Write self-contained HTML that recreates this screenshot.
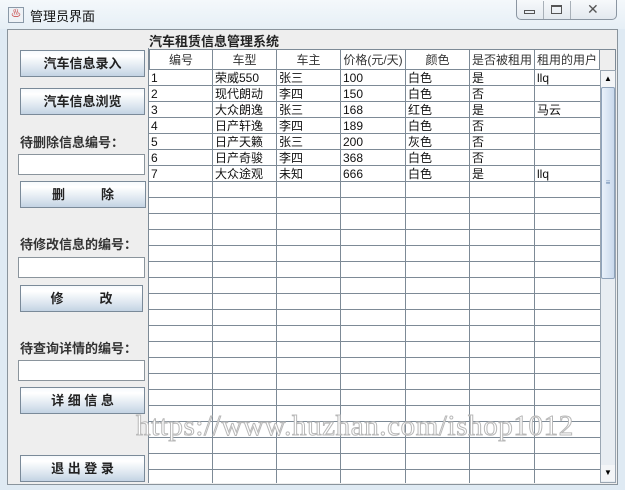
<!DOCTYPE html>
<html><head><meta charset="utf-8"><style>
*{margin:0;padding:0;box-sizing:border-box}
body{width:625px;height:490px;overflow:hidden;background:#dfeaf3;font-family:"Liberation Sans","Noto Sans CJK SC",sans-serif;position:relative}
.a{position:absolute}
.title{left:0;top:0;width:625px;height:29px;background:linear-gradient(#f4f8fb,#e6eff6)}
.panel{left:7px;top:29px;width:611px;height:456px;background:#eeeeee;border:1px solid #8a949c}
.btn{position:absolute;left:20px;width:125px;height:27px;border:1px solid #7a8a99;background:linear-gradient(#f6f9fc 0%,#ffffff 20%,#dbe5ef 70%,#c3d3e3 100%);font-weight:bold;font-size:13px;color:#222;text-align:center;line-height:25px;white-space:nowrap}
.lbl{position:absolute;left:20px;font-weight:bold;font-size:13px;color:#333;white-space:nowrap}
.inp{position:absolute;left:18px;width:127px;height:21px;background:#fff;border:1px solid #8a949c}
.grid{left:149px;top:70px;width:451px;height:413px;background-color:#fff;
background-image:repeating-linear-gradient(to bottom,transparent 0 15px,#7d8a96 15px 16px),linear-gradient(to right,transparent 0 63px,#7d8a96 63px 64px,transparent 64px 127px,#7d8a96 127px 128px,transparent 128px 191px,#7d8a96 191px 192px,transparent 192px 256px,#7d8a96 256px 257px,transparent 257px 320px,#7d8a96 320px 321px,transparent 321px 385px,#7d8a96 385px 386px,transparent 386px)}
.hd{top:49px;height:21px;background:#fff;border-right:1px solid #7d8a96;border-bottom:1px solid #7d8a96;font-size:12px;text-align:center;line-height:20px;color:#333;white-space:nowrap;overflow:hidden}
.c{position:absolute;font-size:12px;line-height:16px;color:#111;white-space:nowrap;width:62px}
</style></head><body>
<div class="a title"></div>
<div class="a" style="left:8px;top:7px;width:16px;height:16px;border:1px solid #8a99a8;background:#eef2f6;font-size:10px;color:#c55;text-align:center;line-height:14px">♨</div>
<div class="a" style="left:30px;top:6px;font-size:13px;color:#111">管理员界面</div>
<div class="a" style="left:516px;top:0;width:101px;height:20px;border:1px solid #8b96a2;border-top:none;border-radius:0 0 5px 5px;background:linear-gradient(#f7f9fb,#e3e9ef)"></div>
<div class="a" style="left:543px;top:1px;width:1px;height:18px;background:#a8b0b8"></div>
<div class="a" style="left:570px;top:1px;width:1px;height:18px;background:#a8b0b8"></div>
<div class="a" style="left:524px;top:10px;width:11px;height:4px;border:1px solid #555"></div>
<div class="a" style="left:551px;top:5px;width:11px;height:9px;border:1px solid #555;border-top-width:2px"></div>
<div class="a" style="left:587px;top:1px;font-size:14px;color:#555">✕</div>
<div class="a panel"></div>
<div class="a" style="left:149px;top:31px;font-weight:bold;font-size:13px;color:#222">汽车租赁信息管理系统</div>
<div class="btn" style="top:50px">汽车信息录入</div>
<div class="btn" style="top:88px">汽车信息浏览</div>
<div class="lbl" style="top:132px">待删除信息编号：</div>
<div class="inp" style="top:154px"></div>
<div class="btn" style="top:181px;width:126px">删&nbsp;&nbsp;&nbsp;&nbsp;&nbsp;&nbsp;&nbsp;&nbsp;&nbsp;&nbsp;除</div>
<div class="lbl" style="top:234px">待修改信息的编号：</div>
<div class="inp" style="top:257px"></div>
<div class="btn" style="top:285px;width:123px">修&nbsp;&nbsp;&nbsp;&nbsp;&nbsp;&nbsp;&nbsp;&nbsp;&nbsp;&nbsp;改</div>
<div class="lbl" style="top:338px">待查询详情的编号：</div>
<div class="inp" style="top:360px"></div>
<div class="btn" style="top:387px">详 细 信 息</div>
<div class="btn" style="top:455px">退 出 登 录</div>
<div class="a grid"></div>
<div class="a" style="left:148px;top:48px;width:1px;height:435px;background:#7d8a96"></div>
<div class="a hd" style="left:149px;width:64px;border-left:1px solid #7d8a96;border-top:1px solid #7d8a96">编号</div>
<div class="a hd" style="left:213px;width:64px;border-top:1px solid #7d8a96">车型</div>
<div class="a hd" style="left:277px;width:64px;border-top:1px solid #7d8a96">车主</div>
<div class="a hd" style="left:341px;width:65px;border-top:1px solid #7d8a96">价格(元/天)</div>
<div class="a hd" style="left:406px;width:64px;border-top:1px solid #7d8a96">颜色</div>
<div class="a hd" style="left:470px;width:65px;border-top:1px solid #7d8a96">是否被租用</div>
<div class="a hd" style="left:535px;width:65px;border-top:1px solid #7d8a96">租用的用户</div>
<div class="a" style="left:600px;top:49px;width:16px;height:21px;background:#eee;border-top:1px solid #7d8a96;border-right:1px solid #7d8a96"></div>
<div class="a" style="left:600px;top:70px;width:16px;height:413px;background:#e8edf2;border:1px solid #9aa6b2"></div>
<div class="a" style="left:601px;top:71px;width:14px;height:16px;background:#f3f5f7;font-size:8px;text-align:center;line-height:16px">▲</div>
<div class="a" style="left:601px;top:87px;width:14px;height:192px;border:1px solid #8fa3ba;border-radius:2px;background:linear-gradient(to right,#e9f1fa,#c9d9ec);font-size:8px;color:#6a8ab0;text-align:center;line-height:190px">≡</div>
<div class="a" style="left:601px;top:465px;width:14px;height:16px;background:#f3f5f7;font-size:8px;text-align:center;line-height:16px">▼</div>
<div class="a" style="left:151px;top:70px">
<div class="c" style="left:0;top:0">1<br>2<br>3<br>4<br>5<br>6<br>7</div>
<div class="c" style="left:64px;top:0">荣威550<br>现代朗动<br>大众朗逸<br>日产轩逸<br>日产天籁<br>日产奇骏<br>大众途观</div>
<div class="c" style="left:128px;top:0">张三<br>李四<br>张三<br>李四<br>张三<br>李四<br>未知</div>
<div class="c" style="left:192px;top:0">100<br>150<br>168<br>189<br>200<br>368<br>666</div>
<div class="c" style="left:257px;top:0">白色<br>白色<br>红色<br>白色<br>灰色<br>白色<br>白色</div>
<div class="c" style="left:321px;top:0">是<br>否<br>是<br>否<br>否<br>否<br>是</div>
<div class="c" style="left:386px;top:0">llq<br>&nbsp;<br>马云<br>&nbsp;<br>&nbsp;<br>&nbsp;<br>llq</div>
</div>
<div class="a" style="left:136px;top:410px;font-family:'Liberation Serif',serif;font-size:29px;color:#fff;-webkit-text-stroke:1px #b8b8b8;letter-spacing:0.6px;white-space:nowrap">https://www.huzhan.com/ishop1012</div>
</body></html>
